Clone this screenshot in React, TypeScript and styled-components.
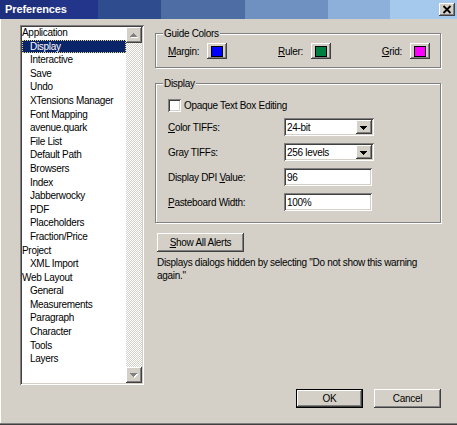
import React from 'react'
import styled, { createGlobalStyle } from 'styled-components'

const face = '#d4d0c8'
const shadow = '#808080'
const darkShadow = '#404040'

const raised = `box-shadow: inset -1px -1px 0 ${darkShadow}, inset 1px 1px 0 #ffffff, inset -2px -2px 0 ${shadow}, inset 2px 2px 0 ${face};`
const sunken = `box-shadow: inset 1px 1px 0 ${shadow}, inset -1px -1px 0 #ffffff, inset 2px 2px 0 ${darkShadow}, inset -2px -2px 0 ${face};`

const GlobalStyle = createGlobalStyle`
  html, body {
    margin: 0;
    padding: 0;
    background: ${face};
  }
  body {
    font-family: "Liberation Sans", Arial, sans-serif;
    font-size: 10px;
    letter-spacing: -0.3px;
    color: #000000;
  }
`

const Window = styled.div`
  width: 457px;
  height: 425px;
  box-sizing: border-box;
  display: flex;
  flex-direction: column;
  background: ${face};
  box-shadow: inset 0 -1px 0 ${darkShadow}, inset 0 -2px 0 ${shadow}, inset 1px 0 0 #ffffff;
`

const TitleBar = styled.div`
  height: 19px;
  flex: none;
  display: flex;
  align-items: center;
  justify-content: space-between;
  padding: 0 2px 0 5px;
  background: linear-gradient(
    to right,
    #1e2f7e 0 50px,
    #22358a 50px 98px,
    #2f4c8e 98px 161px,
    #4f6da5 161px 245px,
    #6f91c1 245px 328px,
    #8db0da 328px 390px,
    #a5c9ec 390px
  );
`

const Title = styled.span`
  color: #ffffff;
  font-weight: bold;
  font-size: 11px;
  letter-spacing: -0.1px;
  line-height: 19px;
`

const CloseButton = styled.div`
  width: 16px;
  height: 13px;
  background: ${face};
  ${raised}
  display: flex;
  align-items: center;
  justify-content: center;
`

const Body = styled.div`
  flex: 1;
  display: flex;
  flex-direction: column;
  padding: 6px 16px 15px 20px;
`

const Main = styled.div`
  display: flex;
  gap: 11px;
`

const ListBox = styled.div`
  width: 124px;
  height: 360px;
  box-sizing: border-box;
  padding: 2px;
  display: flex;
  background: #ffffff;
  ${sunken}
`

const Items = styled.ul`
  flex: 1;
  margin: -1px 0 0;
  padding: 0;
  list-style: none;
  overflow: hidden;
`

const Item = styled.li<{ $child?: boolean; $selected?: boolean }>`
  height: 13.6px;
  line-height: 13.6px;
  padding-left: ${p => (p.$child ? 8 : 0)}px;
  white-space: nowrap;
  color: ${p => (p.$selected ? '#ffffff' : '#000000')};
  background: ${p => (p.$selected ? '#0a246a' : 'transparent')};
  outline: ${p => (p.$selected ? '1px dotted #e9d98f' : 'none')};
  outline-offset: -1px;
`

const ScrollBar = styled.div`
  width: 16px;
  display: flex;
  flex-direction: column;
  justify-content: space-between;
  background: repeating-conic-gradient(#ffffff 0 25%, ${face} 0 50%) 0 0 / 2px 2px;
`

const ScrollButton = styled.div`
  width: 16px;
  height: 16px;
  background: ${face};
  ${raised}
`

const Panel = styled.div`
  flex: 1;
  display: flex;
  flex-direction: column;
`

const GroupBox = styled.div<{ $gap: number }>`
  position: relative;
  margin-top: ${p => p.$gap}px;
  border: 1px solid ${shadow};
  box-shadow: inset 1px 1px 0 #ffffff, 1px 1px 0 #ffffff;
`

const Caption = styled.span`
  position: absolute;
  top: -7px;
  left: 7px;
  padding: 0 1px;
  line-height: 13px;
  background: ${face};
`

const GuideRow = styled.div`
  display: flex;
  justify-content: space-between;
  align-items: center;
  padding: 9px 10px 8px 12px;
`

const ColorField = styled.div`
  display: flex;
  align-items: center;
  gap: 8px;
`

const SwatchButton = styled.div`
  width: 20px;
  height: 16px;
  background: ${face};
  ${raised}
  display: flex;
  align-items: center;
  justify-content: center;
`

const Swatch = styled.span<{ $color: string }>`
  width: 10px;
  height: 9px;
  border: 1px solid #000000;
  background: ${p => p.$color};
`

const DisplayBody = styled.div`
  padding: 15px 0 11px 12px;
`

const CheckRow = styled.label`
  display: flex;
  align-items: center;
  gap: 3px;
  height: 13px;
`

const CheckBox = styled.span`
  width: 13px;
  height: 13px;
  background: #ffffff;
  ${sunken}
`

const FieldGrid = styled.div`
  margin-top: 6px;
  display: grid;
  grid-template-columns: 116px auto;
  row-gap: 7px;
  align-items: center;
`

const Select = styled.div`
  width: 90px;
  height: 18px;
  box-sizing: border-box;
  padding: 2px;
  display: flex;
  align-items: center;
  background: #ffffff;
  ${sunken}
`

const SelectValue = styled.span`
  flex: 1;
  padding-left: 1px;
`

const DropButton = styled.div`
  width: 16px;
  height: 14px;
  background: ${face};
  ${raised}
`

const TextField = styled.input`
  width: 88px;
  height: 18px;
  box-sizing: border-box;
  margin: 0;
  padding: 0 3px;
  border: none;
  outline: none;
  font: inherit;
  letter-spacing: inherit;
  background: #ffffff;
  ${sunken}
`

const PushButton = styled.button<{ $width: number; $default?: boolean }>`
  width: ${p => p.$width}px;
  height: 19px;
  margin: 0;
  padding: 0;
  font: inherit;
  letter-spacing: inherit;
  color: #000000;
  background: ${face};
  border: ${p => (p.$default ? '1px solid #000000' : 'none')};
  ${raised}
`

const AlertsButton = styled(PushButton)`
  margin: 10px 0 0 2px;
  align-self: flex-start;
`

const Note = styled.p`
  margin: 4px 0 0 2px;
  width: 275px;
  line-height: 13px;
`

const Footer = styled.div`
  display: flex;
  justify-content: flex-end;
  gap: 11px;
  margin-top: 4px;
`

const Key = styled.u`
  text-decoration: underline;
`

const UpArrow = () => (
  <svg width="16" height="16" viewBox="0 0 16 16" shapeRendering="crispEdges">
    <polygon points="8.5,7 12.5,11 4.5,11" fill="#ffffff" />
    <polygon points="7.5,6 11.5,10 3.5,10" fill={shadow} />
  </svg>
)

const DownArrow = ({ color = shadow, disabled = true }: { color?: string; disabled?: boolean }) => (
  <svg width="16" height="16" viewBox="0 0 16 16" shapeRendering="crispEdges">
    {disabled && <polygon points="4.5,7 12.5,7 8.5,11" fill="#ffffff" />}
    <polygon points="3.5,6 11.5,6 7.5,10" fill={color} />
  </svg>
)

const CloseGlyph = () => (
  <svg width="10" height="9" viewBox="0 0 10 9">
    <path d="M1.5 1 L8.5 8 M8.5 1 L1.5 8" stroke="#000000" strokeWidth="1.8" />
  </svg>
)

const tree: { label: string; child?: boolean }[] = [
  { label: 'Application' },
  { label: 'Display', child: true },
  { label: 'Interactive', child: true },
  { label: 'Save', child: true },
  { label: 'Undo', child: true },
  { label: 'XTensions Manager', child: true },
  { label: 'Font Mapping', child: true },
  { label: 'avenue.quark', child: true },
  { label: 'File List', child: true },
  { label: 'Default Path', child: true },
  { label: 'Browsers', child: true },
  { label: 'Index', child: true },
  { label: 'Jabberwocky', child: true },
  { label: 'PDF', child: true },
  { label: 'Placeholders', child: true },
  { label: 'Fraction/Price', child: true },
  { label: 'Project' },
  { label: 'XML Import', child: true },
  { label: 'Web Layout' },
  { label: 'General', child: true },
  { label: 'Measurements', child: true },
  { label: 'Paragraph', child: true },
  { label: 'Character', child: true },
  { label: 'Tools', child: true },
  { label: 'Layers', child: true },
]

const guides = [
  { key: 'M', rest: 'argin:', color: '#0000ff' },
  { key: 'R', rest: 'uler:', color: '#008040' },
  { key: 'G', rest: 'rid:', color: '#ff00ff' },
]

const App = () => {
  return (
    <Window>
      <GlobalStyle />
      <TitleBar>
        <Title>Preferences</Title>
        <CloseButton>
          <CloseGlyph />
        </CloseButton>
      </TitleBar>
      <Body>
        <Main>
          <ListBox>
            <Items>
              {tree.map(item => (
                <Item key={item.label} $child={item.child} $selected={item.label === 'Display'}>
                  {item.label}
                </Item>
              ))}
            </Items>
            <ScrollBar>
              <ScrollButton>
                <UpArrow />
              </ScrollButton>
              <ScrollButton>
                <DownArrow />
              </ScrollButton>
            </ScrollBar>
          </ListBox>

          <Panel>
            <GroupBox $gap={8}>
              <Caption>Guide Colors</Caption>
              <GuideRow>
                {guides.map(g => (
                  <ColorField key={g.key}>
                    <span>
                      <Key>{g.key}</Key>
                      {g.rest}
                    </span>
                    <SwatchButton>
                      <Swatch $color={g.color} />
                    </SwatchButton>
                  </ColorField>
                ))}
              </GuideRow>
            </GroupBox>

            <GroupBox $gap={15}>
              <Caption>Display</Caption>
              <DisplayBody>
                <CheckRow>
                  <CheckBox />
                  Opaque Text Box Editing
                </CheckRow>
                <FieldGrid>
                  <span>
                    <Key>C</Key>olor TIFFs:
                  </span>
                  <Select>
                    <SelectValue>24-bit</SelectValue>
                    <DropButton>
                      <DownArrow color="#000000" disabled={false} />
                    </DropButton>
                  </Select>
                  <span>Gray TIFFs:</span>
                  <Select>
                    <SelectValue>256 levels</SelectValue>
                    <DropButton>
                      <DownArrow color="#000000" disabled={false} />
                    </DropButton>
                  </Select>
                  <span>
                    Display DPI <Key>V</Key>alue:
                  </span>
                  <TextField value="96" readOnly />
                  <span>
                    <Key>P</Key>asteboard Width:
                  </span>
                  <TextField value="100%" readOnly />
                </FieldGrid>
              </DisplayBody>
            </GroupBox>

            <AlertsButton $width={87}>
              <Key>S</Key>how All Alerts
            </AlertsButton>
            <Note>Displays dialogs hidden by selecting "Do not show this warning again."</Note>
          </Panel>
        </Main>

        <Footer>
          <PushButton $width={67} $default>
            OK
          </PushButton>
          <PushButton $width={67}>Cancel</PushButton>
        </Footer>
      </Body>
    </Window>
  )
}

export default App
